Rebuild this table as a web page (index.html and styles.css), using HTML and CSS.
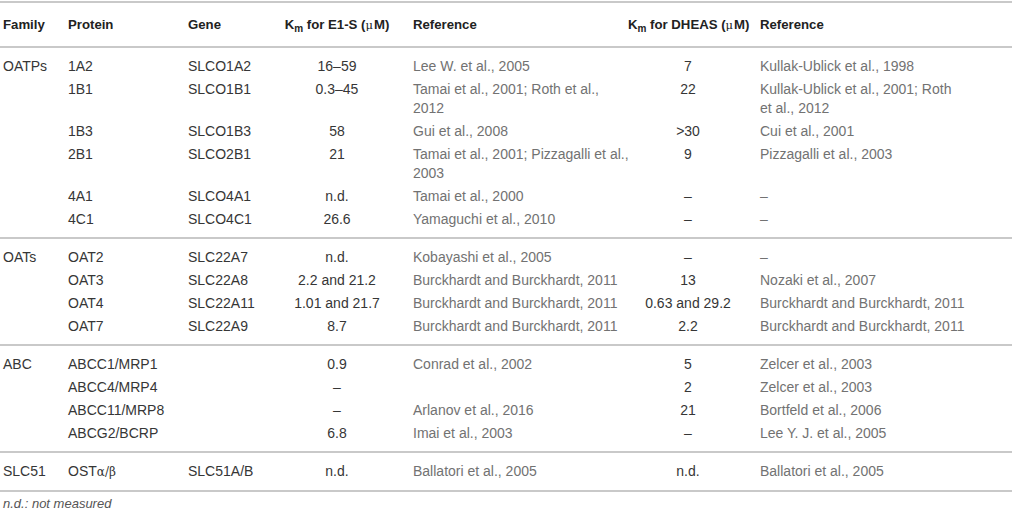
FILE: index.html
```html
<!DOCTYPE html>
<html>
<head>
<meta charset="utf-8">
<link rel="stylesheet" href="styles.css">
</head>
<body>
<table class="tbl">
  <colgroup>
    <col class="c-fam"><col class="c-prot"><col class="c-gene"><col class="c-km1"><col class="c-ref1"><col class="c-km2"><col class="c-ref2">
  </colgroup>
  <thead>
    <tr>
      <th class="fam">Family</th>
      <th>Protein</th>
      <th>Gene</th>
      <th class="km km1">K<sub>m</sub> for E1-S (<span class="mu">μ</span>M)</th>
      <th class="ref1">Reference</th>
      <th class="km km2">K<sub>m</sub> for DHEAS (<span class="mu">μ</span>M)</th>
      <th class="ref2">Reference</th>
    </tr>
  </thead>
  <tbody>
    <tr><td class="fam">OATPs</td><td>1A2</td><td>SLCO1A2</td><td class="km km1">16–59</td><td class="ref ref1">Lee W. et al., 2005</td><td class="km km2">7</td><td class="ref ref2">Kullak-Ublick et al., 1998</td></tr>
    <tr><td class="fam"></td><td>1B1</td><td>SLCO1B1</td><td class="km km1">0.3–45</td><td class="ref ref1">Tamai et al., 2001; Roth et al.,<br>2012</td><td class="km km2">22</td><td class="ref ref2">Kullak-Ublick et al., 2001; Roth<br>et al., 2012</td></tr>
    <tr><td class="fam"></td><td>1B3</td><td>SLCO1B3</td><td class="km km1">58</td><td class="ref ref1">Gui et al., 2008</td><td class="km km2">&gt;30</td><td class="ref ref2">Cui et al., 2001</td></tr>
    <tr><td class="fam"></td><td>2B1</td><td>SLCO2B1</td><td class="km km1">21</td><td class="ref ref1">Tamai et al., 2001; Pizzagalli et al.,<br>2003</td><td class="km km2">9</td><td class="ref ref2">Pizzagalli et al., 2003</td></tr>
    <tr><td class="fam"></td><td>4A1</td><td>SLCO4A1</td><td class="km km1">n.d.</td><td class="ref ref1">Tamai et al., 2000</td><td class="km km2">–</td><td class="ref ref2">–</td></tr>
    <tr><td class="fam"></td><td>4C1</td><td>SLCO4C1</td><td class="km km1">26.6</td><td class="ref ref1">Yamaguchi et al., 2010</td><td class="km km2">–</td><td class="ref ref2">–</td></tr>
  </tbody>
  <tbody>
    <tr><td class="fam">OATs</td><td>OAT2</td><td>SLC22A7</td><td class="km km1">n.d.</td><td class="ref ref1">Kobayashi et al., 2005</td><td class="km km2">–</td><td class="ref ref2">–</td></tr>
    <tr><td class="fam"></td><td>OAT3</td><td>SLC22A8</td><td class="km km1">2.2 and 21.2</td><td class="ref ref1">Burckhardt and Burckhardt, 2011</td><td class="km km2">13</td><td class="ref ref2">Nozaki et al., 2007</td></tr>
    <tr><td class="fam"></td><td>OAT4</td><td>SLC22A11</td><td class="km km1">1.01 and 21.7</td><td class="ref ref1">Burckhardt and Burckhardt, 2011</td><td class="km km2">0.63 and 29.2</td><td class="ref ref2">Burckhardt and Burckhardt, 2011</td></tr>
    <tr><td class="fam"></td><td>OAT7</td><td>SLC22A9</td><td class="km km1">8.7</td><td class="ref ref1">Burckhardt and Burckhardt, 2011</td><td class="km km2">2.2</td><td class="ref ref2">Burckhardt and Burckhardt, 2011</td></tr>
  </tbody>
  <tbody>
    <tr><td class="fam">ABC</td><td>ABCC1/MRP1</td><td></td><td class="km km1">0.9</td><td class="ref ref1">Conrad et al., 2002</td><td class="km km2">5</td><td class="ref ref2">Zelcer et al., 2003</td></tr>
    <tr><td class="fam"></td><td>ABCC4/MRP4</td><td></td><td class="km km1">–</td><td class="ref ref1"></td><td class="km km2">2</td><td class="ref ref2">Zelcer et al., 2003</td></tr>
    <tr><td class="fam"></td><td>ABCC11/MRP8</td><td></td><td class="km km1">–</td><td class="ref ref1">Arlanov et al., 2016</td><td class="km km2">21</td><td class="ref ref2">Bortfeld et al., 2006</td></tr>
    <tr><td class="fam"></td><td>ABCG2/BCRP</td><td></td><td class="km km1">6.8</td><td class="ref ref1">Imai et al., 2003</td><td class="km km2">–</td><td class="ref ref2">Lee Y. J. et al., 2005</td></tr>
  </tbody>
  <tbody>
    <tr><td class="fam">SLC51</td><td>OST<span class="greek">α/β</span></td><td>SLC51A/B</td><td class="km km1">n.d.</td><td class="ref ref1">Ballatori et al., 2005</td><td class="km km2">n.d.</td><td class="ref ref2">Ballatori et al., 2005</td></tr>
  </tbody>
</table>
<p class="note">n.d.: not measured</p>
</body>
</html>
```

FILE: styles.css
```css
html, body {
  margin: 0;
  padding: 0;
  background: #ffffff;
}

body {
  font-family: "Liberation Sans", Arial, sans-serif;
  font-size: 14px;
  color: #363636;
}

.tbl {
  width: 1012px;
  margin-top: 1px;
  border-collapse: collapse;
  table-layout: fixed;
  border-top: 2px solid #c9c9c9;
}

.c-fam { width: 62px; }
.c-prot { width: 120px; }
.c-gene { width: 90px; }
.c-km1 { width: 135px; }
.c-ref1 { width: 219px; }
.c-km2 { width: 128px; }
.c-ref2 { width: 258px; }

.tbl th,
.tbl td {
  padding: 2px 6px;
  line-height: 19px;
  text-align: left;
  vertical-align: top;
  white-space: nowrap;
}

.tbl th {
  font-size: 13.2px;
  font-weight: bold;
  color: #222222;
  padding-top: 12px;
  padding-bottom: 11px;
  border-bottom: 2px solid #c9c9c9;
}

.tbl tbody {
  border-bottom: 2px solid #c9c9c9;
}

.tbl tbody tr:first-child td {
  padding-top: 9px;
}

.tbl tbody tr:last-child td {
  padding-bottom: 8px;
}

.tbl .fam {
  padding-left: 3px;
}

.tbl .km {
  text-align: center;
}

.tbl .km1 {
  padding-right: 11px;
}

.tbl .km2 {
  padding-left: 2px;
  padding-right: 6px;
}

.tbl .ref {
  color: #727272;
}

.tbl .ref2 {
  padding-right: 20px;
}

sub {
  font-size: 10px;
  font-weight: bold;
  line-height: 0;
  vertical-align: -3px;
}

.mu {
  font-family: "DejaVu Serif", serif;
  font-size: 11.5px;
  font-weight: normal;
  margin-right: 1px;
}

.greek {
  font-family: "DejaVu Serif", serif;
  font-size: 12px;
}

.note {
  margin: 4px 0 0 3px;
  font-size: 13px;
  font-style: italic;
  color: #555555;
}
```
